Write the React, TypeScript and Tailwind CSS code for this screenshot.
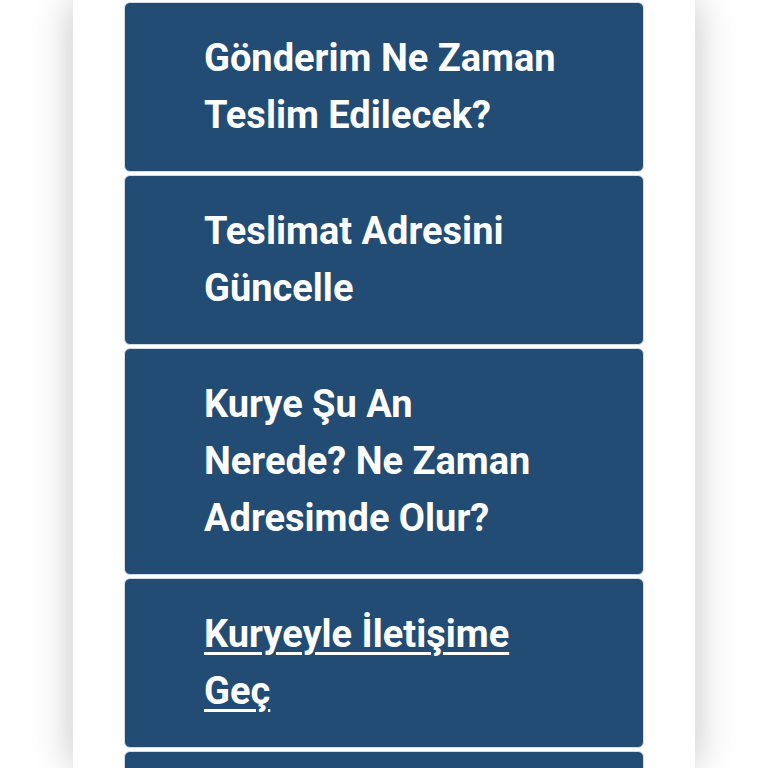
import React from 'react';

const items = [
  { lines: ['Gönderim Ne Zaman', 'Teslim Edilecek?'] },
  { lines: ['Teslimat Adresini', 'Güncelle'] },
  { lines: ['Kurye Şu An', 'Nerede? Ne Zaman', 'Adresimde Olur?'] },
  { lines: ['Kuryeyle İletişime', 'Geç'], link: true },
];

export default function App() {
  return (
    <div className="h-[768px] overflow-hidden bg-white flex justify-center font-['Roboto',sans-serif]">
      {/* Center card */}
      <div className="w-[622px] bg-white shadow-[0_0_38px_rgba(0,0,0,0.24)] px-[51px] pt-[2px] flex flex-col gap-[3px]">
        {items.map((item, i) => (
          <div
            key={i}
            className="shrink-0 rounded-[6px] bg-[#224c73] border border-[#d3dbe4] pl-[79px] pr-4 py-[27px]"
          >
            <p
              className={`text-[38px] leading-[57px] font-bold text-white whitespace-nowrap ${
                item.link ? 'underline decoration-[3px] underline-offset-[5px]' : ''
              }`}
            >
              {item.lines.map((l, j) => (
                <React.Fragment key={j}>
                  {l}
                  {j < item.lines.length - 1 && <br />}
                </React.Fragment>
              ))}
            </p>
          </div>
        ))}
        {/* next button, only its top edge is in view */}
        <div className="shrink-0 h-[170px] rounded-[6px] bg-[#224c73] border border-[#d3dbe4]" />
      </div>
    </div>
  );
}
